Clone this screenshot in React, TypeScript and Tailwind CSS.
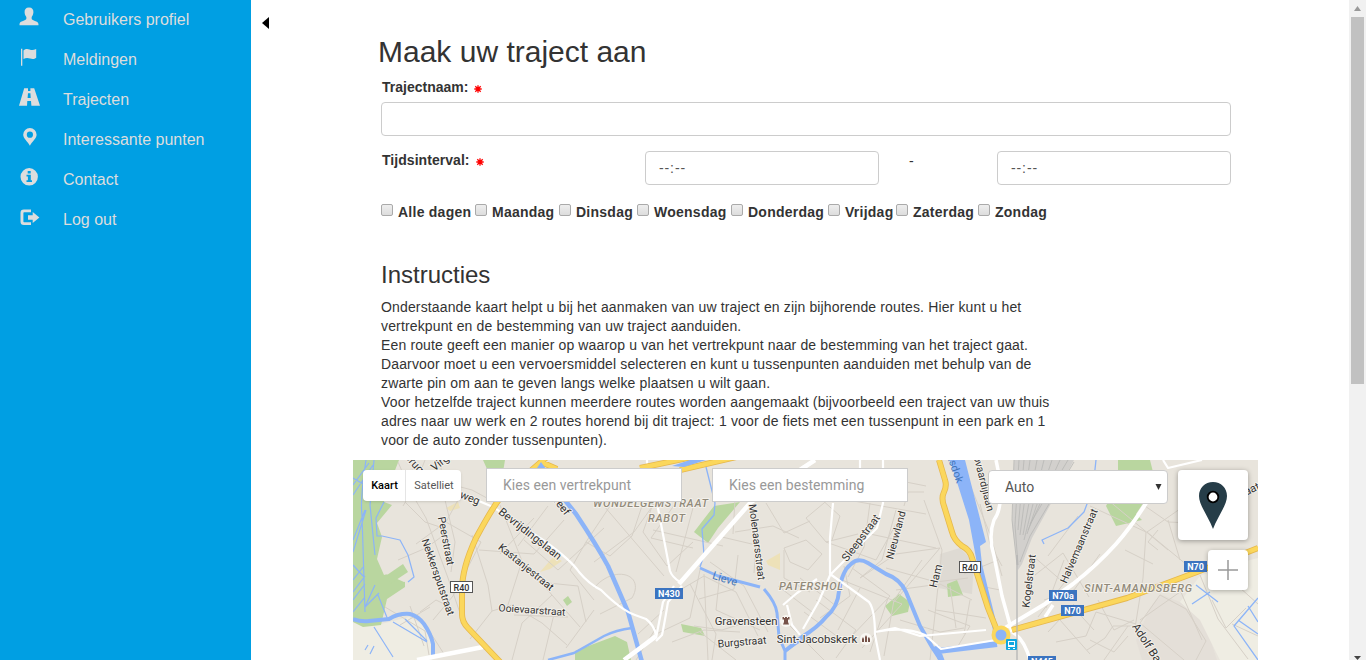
import React from "react";

const menu = [
  {
    label: "Gebruikers profiel",
    icon: (
      <path d="M10 0.6c-3.200 0-4.700 2-4.400 5 .1 1.300.3 2 .8 2.800.3.7.8 1 .9 1.600.4 2-.2 2.600-1.700 3.300-2.200 1-4 1.300-4.800 2.800-.3.7-.3 1.500-.3 2.200h19c0-.7 0-1.500-.4-2.200-.8-1.500-2.600-1.800-4.700-2.800-1.500-.7-2-1.300-1.700-3.300.1-.6.600-.9.900-1.600.4-.8.700-1.500.8-2.800.3-3-1.200-5-4.400-5z" />
    ),
  },
  {
    label: "Meldingen",
    icon: <path d="M2 1.700h1.300v17H2zM4.500 3.400c2-1.700 3.800-1.800 6-1 2.300.9 3.900.8 6.700-.4v8.700c-1.700 1.500-3.700 1.600-6 .9-2.500-.8-4.500-.8-6.700.5z" />,
  },
  {
    label: "Trajecten",
    icon: <path fillRule="evenodd" d="M5.200 1.200H9V4h2.400V1.200h3.800L21 18.800h-8.600L12 14H8.300L8 18.800H0zM9 6.200l-.4 4.800h3.100l-.3-4.800z" />,
  },
  {
    label: "Interessante punten",
    icon: <path fillRule="evenodd" d="M10.900 1a6.700 6.700 0 0 0-6.700 6.700c0 3.700 4.600 6.800 6.700 11.100 2.100-4.300 6.700-7.400 6.700-11.100A6.700 6.700 0 0 0 10.900 1zm0 3.600a3.100 3.100 0 1 1 0 6.200 3.100 3.100 0 0 1 0-6.200z" />,
  },
  {
    label: "Contact",
    icon: <path fillRule="evenodd" d="M10.200 1.100a8.700 8.700 0 1 0 0 17.400 8.700 8.700 0 0 0 0-17.400zM8.700 4h3v2.400h-3zM7.500 7.800h4.300v5.500H13V15H7.500v-1.700h1.400V9.500H7.500z" />,
  },
  {
    label: "Log out",
    icon: <path d="M12 2.500H5C2.500 2.500 1.500 3.600 1.500 6v8.500C1.500 17 2.500 18 5 18h7v-2.800H5.500c-.8 0-1.100-.3-1.100-1V6.300c0-.7.300-1 1.100-1H12zM13.700 5v3.200H9v4.500h4.700v3.200l6.700-5.400z" />,
  },
];

const days = [
  { name: "Alle dagen", width: "w-[94px]" },
  { name: "Maandag", width: "w-[84px]" },
  { name: "Dinsdag", width: "w-[78px]" },
  { name: "Woensdag", width: "w-[94px]" },
  { name: "Donderdag", width: "w-[97px]" },
  { name: "Vrijdag", width: "w-[68px]" },
  { name: "Zaterdag", width: "w-[82px]" },
  { name: "Zondag", width: "w-[80px]" },
];

const instructions = [
  "Onderstaande kaart helpt u bij het aanmaken van uw traject en zijn bijhorende routes. Hier kunt u het",
  "vertrekpunt en de bestemming van uw traject aanduiden.",
  "Een route geeft een manier op waarop u van het vertrekpunt naar de bestemming van het traject gaat.",
  "Daarvoor moet u een vervoersmiddel selecteren en kunt u tussenpunten aanduiden met behulp van de",
  "zwarte pin om aan te geven langs welke plaatsen u wilt gaan.",
  "Voor hetzelfde traject kunnen meerdere routes worden aangemaakt (bijvoorbeeld een traject van uw thuis",
  "adres naar uw werk en 2 routes horend bij dit traject: 1 voor de fiets met een tussenpunt in een park en 1",
  "voor de auto zonder tussenpunten).",
];

function Sidebar() {
  return (
    <nav className="h-full w-[251px] shrink-0 bg-[#009fe3]">
      {menu.map((m) => (
        <a key={m.label} className="flex h-10 items-start pl-[19px] text-[16px] leading-10 text-[#ddd]">
          <svg className="mt-[7px] h-5 w-5 shrink-0 overflow-visible" viewBox="0 0 20 20" fill="currentColor">{m.icon}</svg>
          <span className="ml-6 whitespace-nowrap">{m.label}</span>
        </a>
      ))}
    </nav>
  );
}

function Required() {
  return (
    <svg className="ml-[6px] mt-[3px] h-[8px] w-[8px]" viewBox="0 0 8 8" stroke="#f00" strokeWidth="1.300">
      <path d="M4 .3v7.400M.3 4h7.400M1.300 1.300l5.400 5.400M6.700 1.300L1.300 6.700" />
    </svg>
  );
}

function TimeField() {
  return <div className="h-[34px] w-[234px] rounded border border-[#ccc] pl-[13px] text-[14px] font-normal leading-[33px] tracking-[0.9px] text-[#555]">--:--</div>;
}

const streets = `M398 462l14 32 14 24 22 60 12 35M440 460l5 40 10 42-4 30M405 502l20 20 18 6M412 470l30 12 30 8 26 14M425 460l-10 26-12 20M458 500l-12 22-30 22M446 522l35 20M481 542l-28 54-20 24M398 560l28-12 22-16M472 535l16 50 4 26 20-6 30 18 25 22M492 611l-22 28M479 550l55 4 30-34M500 505l22 56-16 50M522 561l30 34 28 32M552 595l-30 28-10 37M524 540l34 30 46-42M534 518l-34 36M548 506l-30 40M538 582l40 4 8 36M555 610l-12 50M514 615l54 2M566 648l28-38M420 612l16-12 16 8M410 606l14 40M385 607l40 24 4 24M400 625l30-18M430 632l14 22
M610 506l-24 36 24 14 22-20 12-36M586 542l-16 28 24 30M594 562l40-30 20-28M604 506l60 70M655 498l-12 34 24 34M667 566l26-24M675 504l-24 34 42 10M694 504l-18 68M653 530l70 16M594 588c20-24 52-14 38 10l-32 16M664 610l-26 24M680 590l24-14 32 16 22 44M704 574l4 86M690 584l26 50-4 26M700 570l-10 48-34 16M720 572l-4 38 44 20M710 562l34 24 24 46M738 555l-4 34-35 10M722 537l34 8-2 28M735 500l-2 34M735 532l38-6 26 12M766 503l18 30 26-12M784 548l22-8 16 14-14 16-18-8zM784 550v28l26 14M778 586l34 26M694 626l28 4 38-12M672 642l32-12 36 2M700 632l36 28M656 628l-20 32
M800 480l40 36-8 24M830 498l-24 20 20 24 32-8M870 503l-6 44-16 30M848 500l78 14M826 542l50 18 20-36M870 534l66 14M896 510l-14 50-22 18M860 578l36-24 44-6M924 500l18 50-12 110M940 548l-46 54M922 560l-28 40-10 56M928 610l42 16-12 20M886 568l50 14 32-4M896 590l44-6 32 16M936 610l50 8M950 586l6 42M970 600l-6 34M900 620l40 12 24-4M844 566l6 30-30 22M852 568l38 28-42 44M842 580l60 24-40 44M860 588l-22 42M888 598l-18 54M816 600l40 30-20 28M804 612l38 28M790 626l34 34M800 578l36 28M926 486l-20-4v-14M924 492h-16l-4 14
M960 460l30 74 12 42M980 504l10 40 12 22M998 560l-34 14M1000 590l-20-4M1032 555l32 28-26 34M1035 575l28-22 26 44M1044 600l30-10 26-36M1064 560l-18 48M1078 516l-30 40M1090 506l56 26-3 46-8 50M1108 500l60 50M1122 490l46 32 46 2M1147 532l40-28M1147 532l46 38M1125 550l28 14M1158 550l-10-8 10-12M1168 520l12 40M1048 632l26-28M1056 642l30-6 10-24 40 12M1060 620l30 34M1072 606l22 24M1098 600l16 30 20-10M1128 626l-24 34M1160 595l-20 28 44 37M1160 595l26 14 20 32-10 19M1180 590l22 50M1140 620l40-28M1200 575l18 44 30 40M1212 600l14 28 20-20M1220 570l38 34M1232 624l26 12M1087 650l18-12 8-12h22M1090 640l24 12 14-16`;

const ringRoads =
  "M553 452l-12 10q-28 24-41 36-10 14-24 40-14 30-14 52v24q0 8 6 14l34 36M541 462l16 7M640 468l86-18M680 470l65-15M939 460l6 20q2 6-1 12-3 6 0 14l8 26q2 8 10 14 8 4 10 12l16 50 8 20-1 8M1012 630l115-32 70-26 61-24";

function StreetLabel({ x, y, angle, children, size = 11 }: { x: number; y: number; angle: number; children: string; size?: number }) {
  return (
    <text x={x} y={y} fontSize={size} textAnchor="middle" dominantBaseline="central" transform={`rotate(${angle} ${x} ${y})`}>
      {children}
    </text>
  );
}

function Shield({ x, y, w, children, plain }: { x: number; y: number; w: number; children: string; plain?: boolean }) {
  return (
    <g>
      <rect x={x} y={y} width={w} height="11" fill={plain ? "#fff" : "#3b74c0"} stroke={plain ? "#555" : "none"} />
      <text x={x + w / 2} y={y + 9} fontSize="9" fontWeight={plain ? 500 : 700} textAnchor="middle" fill={plain ? "#333" : "#fff"} stroke="none">
        {children}
      </text>
    </g>
  );
}

function StreetMap() {
  return (
    <svg className="col-start-1 row-start-1 h-[200px] w-[905px]" viewBox="353 460 905 200" fontFamily="Roboto, sans-serif">
      <rect x="353" y="460" width="905" height="200" fill="#e8e4dc" />
      <path fill="#dedad3" d="M940 554l20-6 14 14-2 32-34-6z" />
      <path fill="#e4dfd8" d="M1150 608l10-14 20 8 22 12 15 46h-75l-6-20z" />
      <path fill="#efede3" d="M353 622l28 2 28-7 15 8 10 22-2 13h-79zM1180 602l20-26 20-8 38-10v102h-38l-20-40z" />
      <g fill="#b9d69f">
        <path d="M353 460h46l-7 18-8 24 8 3-15 18 5 14-5 22 7 16 21-6v18l-18 12-6 26-18 2-10-5z" />
        <path d="M483 460h22l-2 12-16-3zM563 600l5-4 4 6-5 4zM694 532l20-26 26-4-22 26-10 15zM681 624l20 4 4 8-22-4zM885 606l14-12 11 8-2 10-16 4zM947 584l10-4 6 15-15 2zM1118 460h32l6 24-20 30 6 6-26 6-10-20 12-24zM575 651l40-15 12 6 4 18h-56z" />
      </g>
      <path fill="#e8e4dc" d="M384 562l16-10 12 10 2 18-10 2-18-8z" />
      <path fill="#b9d69f" d="M387 575l16-11 5 8-18 12z" />
      <path fill="#ede1b8" d="M540 572l14-16 8 5-12 8zM766 561l14-8v17l-12-5zM446 508l12-6 2 6-10 3z" />
      <path fill="#d2d0cd" d="M1014 460h60l-20 38-22 40-10 26-4 6-6-45z" />
      <path stroke="#b8b7b5" strokeWidth=".8" fill="none" d="M1014 460l-2 60 5 45M1019 460l-4 65 3 40M1024 460l-6 70M1030 460l-10 75M1037 460l-14 75M1044 460l-20 80M1052 460l-25 74M1060 460l-32 70M1068 460l-38 64M1074 462l-44 74-10 26" />
      <path d={streets} fill="none" stroke="#d6d0c7" strokeWidth="1" strokeLinejoin="round" />
      <g fill="none" stroke="#8cb4f8" strokeLinejoin="round">
        <path strokeWidth="4" d="M353 619q8 3 16 2l20-2q10-6 21-5 8 2 14 10 7 10 9 20v12" />
        <path strokeWidth="1.200" d="M366 460q-6 40-4 55l3 97M374 460l-4 45 5 50M384 502l-8 16 1 18 5 0 18 4 8 15 6 22-6 5M353 478l20 12M353 495l20-30M353 485l16-22M353 540l12-30M353 552l13-42M353 580l11-14M353 592l12-16M353 600l12-16M353 612l12-15M353 565l11 12M375 585l-10 22 14-14M378 595l10 25M374 627l19 30M393 622l34 20M405 619l22 22M365 650l3-5M370 654l4-8" />
        <path strokeWidth="4.500" d="M546 468l14 26 16 20q20 30 32 52l20 46 14 50" />
        <path strokeWidth="2.500" d="M632 628q-16 2-28 8l-30 17-26 7" />
        <path strokeWidth="1.300" d="M706 467l9 36-1 12-12 14 2 26-4 12" />
        <path strokeWidth="3" d="M700 568l18 8 42 11M764 589q12 14 13 24l2 24 6 14v10M785 651l20-14" />
        <path strokeWidth="4" d="M785 651l17-14q16-10 24-20 12-10 13-26 3-20 12-27 7-7 17-1l18 11q14 5 20 18l14 34 12 21 10 15" />
        <path strokeWidth="6" d="M936 646l6 16M938 651l25-3 34-4" />
        <path strokeWidth="1.300" d="M1096 460l-3 28-9 24-16 16-26 12 2 4M1196 585l22 17M1192 604l18-12M1258 598l-24 28 24 34M1238 620l20 14M1248 606l10 16" />
      </g>
      <path fill="#8cb4f8" d="M950 460h15l21 82-6 4 2 18 17 70-4 4-17-69-9-49z" />
      <g fill="none" stroke="#fff" strokeLinejoin="round">
        <path strokeWidth="2.200" d="M453 490l40 17 50 33q28 20 36 32 10 12 22 18 20 20 34 25l11 4q8 6 10 16M657 503l13 68q2 6 10 11M647 460v10M833 503l-3 35v36l17 12 22 16q6 8 6 33l5 25M831 573l-12 28-16 28M831 574l46-46 6-25v-43M875 632q30-6 50 3l16 14 55-9M875 632l20-4 25 8 66-6M860 460v10M1163 460l5 8 34-8M783 605l14-12 20-14M787 605l5 20 8 10" />
        <path strokeWidth="3.500" d="M996 460q10 44-2 60-6 16 0 36l8 40 10 36M1012 632q12 6 18 28M1045 617l8-12" />
        <path strokeWidth="4.500" d="M815 460l-64 42-72 82M417 660l66-13M656 636q-6 5-32 24" />
        <path strokeWidth="2.200" d="M674 586l-11 16-7 36M682 586l-14 16q-4 24-6 33l-6 6" />
        <path strokeWidth="4" d="M1148 500q-16 26-32 44-20 22-43 40l-28 20-40 24" />
      </g>
      <g fill="none" strokeLinejoin="round">
        <path stroke="#e6b84d" strokeWidth="6" d={ringRoads} />
        <path stroke="#fbd75c" strokeWidth="4.400" d={ringRoads} />
        <circle cx="1001" cy="635" r="7.500" fill="#8cb4f8" stroke="#fbd75c" strokeWidth="4" />
        <path stroke="#b4b4b4" strokeWidth="1.300" d="M1017 555v105" />
      </g>
      <path fill="#8cb4f8" d="M537 468l4-6 5 7zM672 466l18-6h16l-22 7z" />
      <g fill="#333" stroke="#f4f1eb" strokeWidth="1.800" paintOrder="stroke">
        <StreetLabel x={414} y={463} angle={48}>Brug</StreetLabel>
        <StreetLabel x={441} y={462} angle={-38}>Virgi</StreetLabel>
        <StreetLabel x={470} y={498} angle={22}>weg</StreetLabel>
        <StreetLabel x={446} y={541} angle={79} size={10.700}>Peerstraat</StreetLabel>
        <StreetLabel x={438} y={577} angle={71} size={10.500}>Nekkersputstraat</StreetLabel>
        <StreetLabel x={530} y={534} angle={38} size={11.300}>Bevrijdingslaan</StreetLabel>
        <StreetLabel x={526} y={567} angle={39} size={10.500}>Kastanjestraat</StreetLabel>
        <StreetLabel x={532} y={610} angle={4} size={10.300}>Ooievaarstraat</StreetLabel>
        <StreetLabel x={560} y={504} angle={52}>dreef</StreetLabel>
        <StreetLabel x={757} y={542} angle={83} size={10.500}>Molenaarsstraat</StreetLabel>
        <StreetLabel x={861} y={538} angle={-53}>Sleepstraat</StreetLabel>
        <StreetLabel x={896} y={535} angle={-75} size={10.500}>Nieuwland</StreetLabel>
        <StreetLabel x={936} y={576} angle={-76}>Ham</StreetLabel>
        <StreetLabel x={983} y={480} angle={76} size={10.500}>Opvaardijlaan</StreetLabel>
        <StreetLabel x={1079} y={546} angle={-67} size={10.500}>Halvemaanstraat</StreetLabel>
        <StreetLabel x={1029} y={581} angle={-83} size={10.500}>Kogelstraat</StreetLabel>
        <StreetLabel x={1155} y={655} angle={57} size={11.500}>Adolf Baeyens</StreetLabel>
        <StreetLabel x={1252} y={489} angle={-25}>aat</StreetLabel>
        <StreetLabel x={742} y={642} angle={-5} size={10.500}>Burgstraat</StreetLabel>
        <StreetLabel x={746} y={621} angle={0} size={11.300}>Gravensteen</StreetLabel>
        <StreetLabel x={817} y={639} angle={0} size={11.300}>Sint-Jacobskerk</StreetLabel>
      </g>
      <g fill="#4275ba">
        <StreetLabel x={725} y={579} angle={17}>Lieve</StreetLabel>
        <StreetLabel x={954} y={466} angle={70}>nksdok</StreetLabel>
      </g>
      <g fill="#918a7a" stroke="#f4f1eb" strokeWidth="1.800" paintOrder="stroke" fontSize="11" fontStyle="italic" fontWeight="500">
        <text x="593" y="507" textLength="115">WONDELGEMSTRAAT</text>
        <text x="648" y="522" textLength="37">RABOT</text>
        <text x="779" y="590" textLength="64">PATERSHOL</text>
        <text x="1084" y="592" textLength="108">SINT-AMANDSBERG</text>
      </g>
      <Shield x={450.500} y={581.500} w={22} plain>R40</Shield>
      <Shield x={959.500} y={561.500} w={21} plain>R40</Shield>
      <Shield x={655} y={588} w={28}>N430</Shield>
      <Shield x={1184} y={561} w={23}>N70</Shield>
      <Shield x={1049} y={590} w={28}>N70a</Shield>
      <Shield x={1061} y={605} w={23}>N70</Shield>
      <Shield x={1028} y={656} w={28}>N445</Shield>
      <circle cx="786" cy="621" r="6" fill="#f8f6f1" />
      <path fill="#765248" d="M782.500 617h1.500v1h1v-1h2v1h1v-1h1.500v2.500h-1.500v2.500l1 2.500h-6l1-2.500v-2.500h-1.500z" />
      <circle cx="866" cy="639" r="6" fill="#f8f6f1" />
      <path fill="#765248" d="M862 642v-3l1-2 1 2v3zM865 642v-5l1-2 1 2v5zM868 642v-4l1-1 1 2v3z" />
      <rect x="1006" y="639" width="11" height="11" rx="1" fill="#13a7df" />
      <path fill="#fff" d="M1008 641h7v6h-7zM1008 648h2v1h-2zM1013 648h2v1h-2z" />
      <path fill="#13a7df" d="M1009 642h5v3h-5z" />
    </svg>
  );
}

function MapControls() {
  return (
    <div className="z-10 col-start-1 row-start-1 flex items-start font-[Roboto,sans-serif]">
      <div className="ml-[10px] mt-[10px] flex h-[31px] w-[98px] rounded-sm bg-white text-[11px] leading-[31px] shadow-sm">
        <span className="w-[43px] border-r border-[#e5e5e5] pl-px text-center font-medium text-black">Kaart</span>
        <span className="flex-1 pl-px text-center text-[#565656]">Satelliet</span>
      </div>
      <div className="ml-[25px] mt-2 h-[34px] w-[196px] border border-[#ccc] bg-white pl-4 text-[14px] leading-[33px] tracking-[0.05px] text-[#999]">Kies een vertrekpunt</div>
      <div className="ml-[30px] mt-2 h-[34px] w-[196px] border border-[#ccc] bg-white pl-4 text-[14px] leading-[33px] tracking-[0.05px] text-[#999]">Kies een bestemming</div>
      <div className="ml-[80px] mt-[10px] flex h-[34px] w-[180px] justify-between rounded-sm border border-[#ccc] bg-white pl-4 pr-[5px] text-[14px] leading-[33px] text-[#555]">
        Auto
        <svg className="mt-[13px] h-[7px] w-[7px]" viewBox="0 0 7 7"><path d="M.5 0h6l-3 6z" fill="#333" /></svg>
      </div>
      <div className="ml-[10px] mt-[10px] flex w-[70px] flex-col items-end gap-[10px]">
        <div className="flex h-[70px] w-[70px] rounded bg-white pl-[21px] pt-[12px] shadow-[0_1px_5px_rgba(0,0,0,.35)]">
          <svg className="h-[47px] w-7" viewBox="0 0 28 47">
            <path fill="#263d48" d="M14 0C6 0 0 6 0 14c0 9 9 20 14 33 5-13 14-24 14-33C28 6 22 0 14 0z" />
            <circle cx="14" cy="15" r="5.300" fill="#fff" stroke="#000" strokeWidth="1.800" />
          </svg>
        </div>
        <div className="flex h-10 w-10 items-center justify-center rounded bg-white shadow-[0_1px_5px_rgba(0,0,0,.3)]">
          <svg className="h-5 w-5" viewBox="0 0 20 20"><path d="M10 0v20M0 10h20" stroke="#999" strokeWidth="1.500" /></svg>
        </div>
      </div>
    </div>
  );
}

function Scrollbar() {
  return (
    <div className="flex h-full w-[17px] shrink-0 flex-col items-center bg-[#f1f1f1]">
      <svg className="mt-[6px] h-[5px] w-[7px]" viewBox="0 0 7 5"><path d="M0 5h7L3.500 0z" fill="#999" /></svg>
      <div className="mt-[6px] h-[367px] w-[13px] bg-[#c1c1c1]" />
      <svg className="mt-auto h-[4px] w-[7px]" viewBox="0 0 7 4"><path d="M0 0h7L3.500 4z" fill="#444" /></svg>
    </div>
  );
}

export default function App() {
  return (
    <div className="flex h-[660px] w-[1366px] overflow-hidden bg-white font-['Liberation_Sans',Arial,sans-serif] text-[#333]">
      <Sidebar />
      <div className="w-[102px] shrink-0 pl-[11px] pt-[17px]">
        <svg className="h-3 w-[7px]" viewBox="0 0 7 12"><path d="M7 0v12L0 6z" fill="#000" /></svg>
      </div>
      <main className="w-[905px] shrink-0">
        <h1 className="h-[80px] pl-[25px] pt-[35px] text-[30px] leading-[34px] whitespace-nowrap">Maak uw traject aan</h1>
        <form className="h-[184px] pl-7 text-[14px] font-bold">
          <label className="flex h-[22px] items-center pb-[8px] pl-px leading-[14px]">Trajectnaam:<Required /></label>
          <div className="h-[34px] w-[850px] rounded border border-[#ccc]" />
          <div className="mt-[15px] flex">
            <label className="flex h-[18px] w-[264px] items-center pl-px tracking-[0.05px]">Tijdsinterval:<Required /></label>
            <TimeField />
            <span className="w-[118px] pl-[30px] font-normal leading-5">-</span>
            <TimeField />
          </div>
          <div className="mt-[17px] flex">
            {days.map((d) => (
              <label key={d.name} className={`flex shrink-0 ${d.width}`}>
                <span className="mt-[2px] h-3 w-3 shrink-0 rounded-[2px] border border-[#aaa] bg-linear-to-b from-[#eee] to-[#ddd]" />
                <span className="ml-[5px] whitespace-nowrap leading-5 tracking-[0.25px]">{d.name}</span>
              </label>
            ))}
          </div>
        </form>
        <section className="h-[196px] pl-7">
          <h2 className="h-[34px] text-[24px] leading-[22px]">Instructies</h2>
          <div className="text-[14px] leading-[19px] tracking-[0.145px]">
            {instructions.map((line) => <p key={line} className="whitespace-nowrap">{line}</p>)}
          </div>
        </section>
        <div className="grid h-[200px] overflow-hidden">
          <StreetMap />
          <MapControls />
        </div>
      </main>
      <div className="flex-1" />
      <Scrollbar />
    </div>
  );
}
